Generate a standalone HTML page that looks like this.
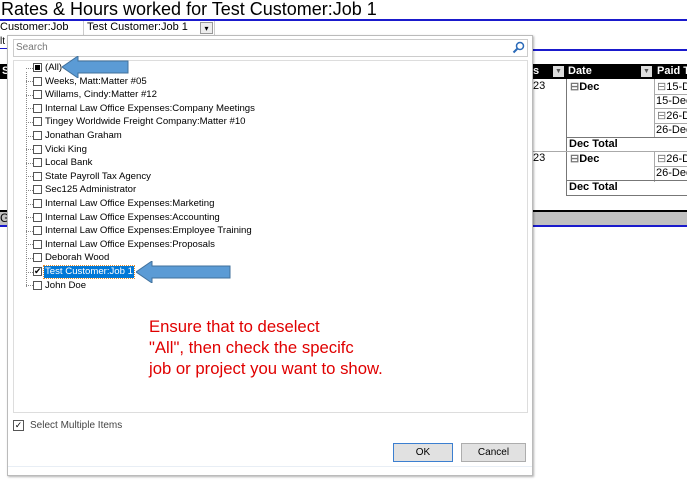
<!DOCTYPE html>
<html><head><meta charset="utf-8"><style>
*{margin:0;padding:0;box-sizing:border-box}
body{width:687px;height:502px;background:#fff;position:relative;overflow:hidden;font-family:"Liberation Sans",Arial,sans-serif;font-size:11px;color:#000}
.a{position:absolute}
.it{position:absolute;left:45px;font-size:9.6px;white-space:nowrap;line-height:12px}
.cb{position:absolute;left:33px;width:9px;height:9px;border:1px solid #555;background:#fff}
.dot{position:absolute;left:26px;width:7px;border-top:1px dotted #888}
.c{position:absolute;font-size:11px;white-space:nowrap}
</style></head><body>
<div class="a" style="left:1px;top:-1px;font-size:18px;white-space:nowrap">Rates &amp; Hours worked for Test Customer:Job 1</div>
<div class="a" style="left:0;top:19px;width:687px;height:2px;background:#1a1acc"></div>
<div class="a" style="left:0;top:21px;font-size:11px">Customer:Job</div>
<div class="a" style="left:83px;top:21px;width:132px;height:14px;border-left:1px solid #ccc;border-right:1px solid #ccc;font-size:11px;padding-left:3px">Test Customer:Job 1</div>
<div class="a" style="left:200px;top:22px;width:13px;height:12px;border:1px solid #999;background:#eee;font-size:8px;text-align:center;line-height:11px">▾</div>
<div class="a" style="left:0;top:36px;font-size:10px;color:#000">lt</div>
<div class="a" style="left:0;top:48px;width:7px;height:1px;background:#1a1acc"></div>
<div class="a" style="left:532px;top:49px;width:155px;height:2px;background:#1a1acc"></div>
<div class="a" style="left:0;top:64px;width:687px;height:15px;background:#000"></div>
<div class="a" style="left:2px;top:65px;color:#fff;font-weight:bold;font-size:11px">S</div>
<div class="c" style="left:533px;top:65px;color:#fff;font-weight:bold">s</div>
<div class="a" style="left:553px;top:66px;width:11px;height:11px;background:#ddd;font-size:7px;text-align:center;line-height:11px;color:#555">▼</div>
<div class="c" style="left:568px;top:65px;color:#fff;font-weight:bold">Date</div>
<div class="a" style="left:641px;top:66px;width:11px;height:11px;background:#ddd;font-size:7px;text-align:center;line-height:11px;color:#555">▼</div>
<div class="c" style="left:657px;top:65px;color:#fff;font-weight:bold">Paid T</div>
<div class="a" style="left:566px;top:79px;width:1px;height:116px;background:#777"></div>
<div class="a" style="left:654px;top:79px;width:1px;height:59px;background:#aaa"></div>
<div class="a" style="left:654px;top:152px;width:1px;height:30px;background:#aaa"></div>
<div class="c" style="left:533px;top:80px">23</div>
<div class="c" style="left:570px;top:80px;font-weight:bold"><span style="color:#777">⊟</span>Dec</div>
<div class="c" style="left:657px;top:80px"><span style="color:#777">⊟</span>15-D</div>
<div class="a" style="left:654px;top:94px;width:33px;height:1px;background:#aaa"></div>
<div class="c" style="left:656px;top:95px">15-Dec</div>
<div class="a" style="left:654px;top:108px;width:33px;height:1px;background:#aaa"></div>
<div class="c" style="left:657px;top:109px"><span style="color:#777">⊟</span>26-D</div>
<div class="a" style="left:654px;top:123px;width:33px;height:1px;background:#aaa"></div>
<div class="c" style="left:656px;top:124px">26-Dec</div>
<div class="a" style="left:566px;top:137px;width:121px;height:1px;background:#777"></div>
<div class="c" style="left:569px;top:138px;font-weight:bold">Dec Total</div>
<div class="a" style="left:532px;top:151px;width:155px;height:1px;background:#aaa"></div>
<div class="c" style="left:533px;top:152px">23</div>
<div class="c" style="left:570px;top:152px;font-weight:bold"><span style="color:#777">⊟</span>Dec</div>
<div class="c" style="left:657px;top:152px"><span style="color:#777">⊟</span>26-D</div>
<div class="a" style="left:654px;top:166px;width:33px;height:1px;background:#aaa"></div>
<div class="c" style="left:656px;top:167px">26-Dec</div>
<div class="a" style="left:566px;top:180px;width:121px;height:1px;background:#777"></div>
<div class="c" style="left:569px;top:181px;font-weight:bold">Dec Total</div>
<div class="a" style="left:566px;top:195px;width:121px;height:1px;background:#777"></div>
<div class="a" style="left:0;top:210px;width:687px;height:2px;background:#000"></div>
<div class="a" style="left:0;top:212px;width:687px;height:13px;background:#c0c0c0"></div>
<div class="a" style="left:0;top:211px;font-size:12px">G</div>
<div class="a" style="left:0;top:225px;width:687px;height:2px;background:#1a1acc"></div>
<div class="a" style="left:7px;top:35px;width:526px;height:441px;background:#fff;border:1px solid #bbb;box-shadow:1px 1px 2px rgba(0,0,0,.3)"></div>
<div class="a" style="left:13px;top:39px;width:515px;height:18px;border:1px solid #ccc;background:#fff;font-size:10px;color:#777;padding:2px 0 0 2px">Search</div>
<svg class="a" style="left:512px;top:41px" width="13" height="13" viewBox="0 0 13 13"><circle cx="8" cy="5" r="3.5" fill="none" stroke="#2a6ab8" stroke-width="1.5"/><path d="M5.5 7.5L1.5 11.5" stroke="#2a6ab8" stroke-width="2"/></svg>
<div class="a" style="left:13px;top:60px;width:515px;height:353px;border:1px solid #ddd"></div>
<div class="a" style="left:26px;top:72px;height:215px;border-left:1px dotted #888"></div>
<div id="L"></div>
<svg class="a" style="left:62px;top:56px" width="68" height="22"><polygon points="0,11 16,0 16,5 66,5 66,17 16,17 16,22" fill="#5b9bd5" stroke="#41719c" stroke-width="1"/></svg>
<svg class="a" style="left:136px;top:261px" width="96" height="22"><polygon points="0,11 16,0 16,5 94,5 94,17 16,17 16,22" fill="#5b9bd5" stroke="#41719c" stroke-width="1"/></svg>
<div class="a" style="left:149px;top:316px;color:#e00000;font-size:16.7px;line-height:21px">Ensure that to deselect<br>"All", then check the specifc<br>job or project you want to show.</div>
<div class="a" style="left:13px;top:420px;width:11px;height:11px;border:1px solid #555;font-size:9px;line-height:9px;text-align:center">✓</div>
<div class="a" style="left:30px;top:420px;font-size:10px;color:#444">Select Multiple Items</div>
<div class="a" style="left:393px;top:443px;width:60px;height:19px;border:1px solid #3c7fd0;background:#e1e1e1;font-size:10px;text-align:center;line-height:17px">OK</div>
<div class="a" style="left:461px;top:443px;width:65px;height:19px;border:1px solid #adadad;background:#e1e1e1;font-size:10px;text-align:center;line-height:17px">Cancel</div>
<div class="a" style="left:8px;top:466px;width:524px;height:1px;background:#e8eef5"></div>
<script>
var items=["(All)","Weeks, Matt:Matter #05","Willams, Cindy:Matter #12","Internal Law Office Expenses:Company Meetings","Tingey Worldwide Freight Company:Matter #10","Jonathan Graham","Vicki King","Local Bank","State Payroll Tax Agency","Sec125 Administrator","Internal Law Office Expenses:Marketing","Internal Law Office Expenses:Accounting","Internal Law Office Expenses:Employee Training","Internal Law Office Expenses:Proposals","Deborah Wood","Test Customer:Job 1","John Doe"];
var h="";items.forEach(function(t,i){var y=62+i*13.6;
h+='<div class="dot" style="top:'+(y+5.5)+'px"></div><div class="cb" style="top:'+(y+1)+'px">'+(i==0?'<div style="margin:1px;width:5px;height:5px;background:#000"></div>':'')+(i==15?'<div style="font-size:9px;line-height:7px;margin-left:0px">✔</div>':'')+'</div>';
h+='<div class="it" style="top:'+y+'px;'+(i==15?'background:#0078d7;color:#fff;outline:1px dotted #e08a2c;padding:0 1px;left:44px':'')+'">'+t.replace(/&/g,'&amp;')+'</div>';});
document.getElementById('L').innerHTML=h;
</script>
</body></html>
